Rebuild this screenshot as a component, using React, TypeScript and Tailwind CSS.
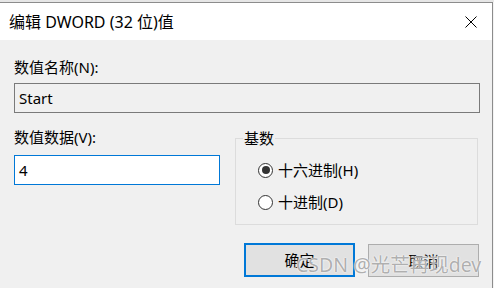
const font = "font-['Noto_Sans','Noto_Sans_CJK_SC',sans-serif]";

const Radio: React.FC<{ checked?: boolean; label: string }> = ({ checked, label }) => (
  <div className="flex h-[20px] items-center gap-[5px]">
    <span className="flex h-[15px] w-[15px] items-center justify-center rounded-full border border-[#333] bg-white">
      {checked ? <span className="h-[8px] w-[8px] rounded-full bg-[#333]" /> : null}
    </span>
    <span className="leading-[20px]">{label}</span>
  </div>
);

export default function App() {
  return (
    <div className={`relative h-[288px] w-[494px] overflow-hidden bg-[#f3f3f3] text-[15px] text-black ${font}`}>
      <div className="h-[2px] bg-[#e6e6e6]" />
      <div className="flex h-[286px] w-[493px] flex-col border-t border-r border-[#8c8c8c] bg-[#f0f0f0]">
        {/* title bar */}
        <div className="flex h-[37px] items-center justify-between bg-white pl-[9px] pr-[15px]">
          <span className="text-[16px] leading-[20px]">编辑 DWORD (32 位)值</span>
          <svg width="12" height="12" viewBox="0 0 12 12" className="text-black">
            <path d="M0.5 0.5 L11.5 11.5 M11.5 0.5 L0.5 11.5" stroke="currentColor" strokeWidth="1" />
          </svg>
        </div>

        {/* body */}
        <div className="flex flex-col px-[14px] pt-[17px]">
          <span className="leading-[20px]">数值名称(N):</span>
          <div className="mt-[6px] flex h-[30px] w-[466px] items-center border border-[#7a7a7a] pl-[4px] leading-[20px]">
            Start
          </div>

          <div className="mt-[14px] flex">
            <div className="flex w-[207px] flex-col">
              <span className="leading-[20px]">数值数据(V):</span>
              <div className="mt-[8px] flex h-[30px] items-center border border-[#0078d7] bg-white pl-[4px] leading-[20px]">
                4
              </div>
            </div>

            <div className="relative ml-[15px] mt-[11px] flex h-[87px] w-[244px] flex-col gap-[12px] border border-[#dcdcdc] pl-[22px] pt-[21px]">
              <span className="absolute left-[7px] top-[-11px] bg-[#f0f0f0] px-[1px] leading-[20px]">基数</span>
              <Radio checked label="十六进制(H)" />
              <Radio label="十进制(D)" />
            </div>
          </div>

          <div className="mt-[18px] flex justify-end gap-[13px]">
            <button className="flex h-[34px] w-[111px] items-center justify-center border-2 border-[#0078d7] bg-[#e1e1e1] leading-[20px]">
              确定
            </button>
            <button className="mr-[-1px] mt-[1px] flex h-[33px] w-[111px] items-center justify-center border border-[#adadad] bg-[#e1e1e1] leading-[20px]">
              取消
            </button>
          </div>
        </div>
      </div>

      {/* watermark */}
      <span className="pointer-events-none absolute left-[296px] top-[253px] text-[19.5px] leading-[24px] text-[#9a9a9a]/80 [text-shadow:0_0_2px_#fff,0_0_1px_#fff]">
        CSDN @光芒再现dev
      </span>
    </div>
  );
}
